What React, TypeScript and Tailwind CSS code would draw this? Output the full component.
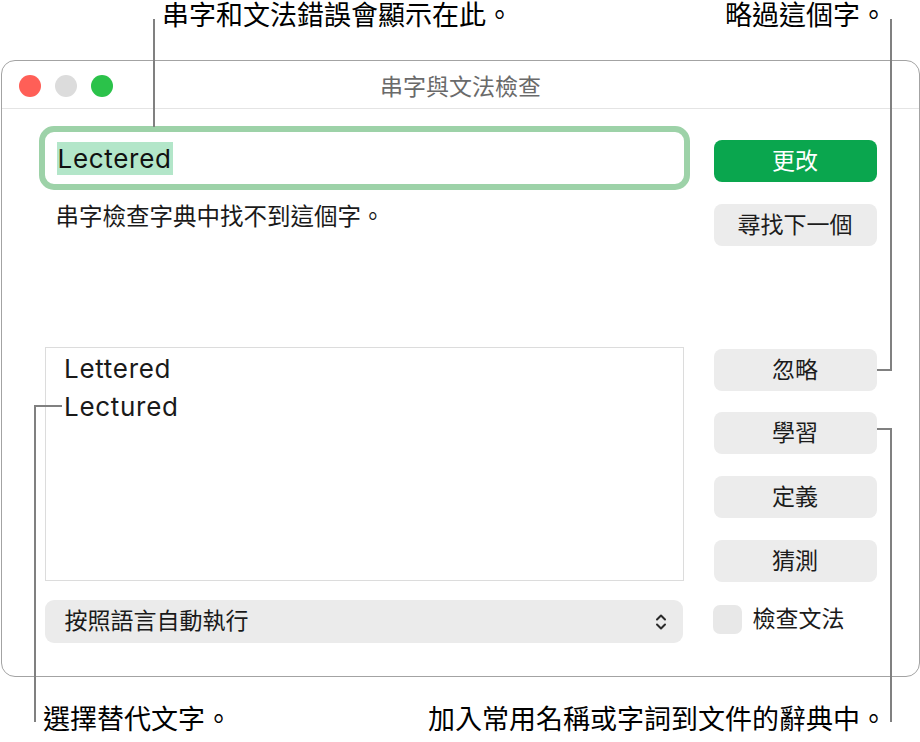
import React from "react";

const FONT = "Inter, 'Noto Sans CJK TC', 'Noto Sans', sans-serif";

function SideButton({ label, primary = false, className = "" }: { label: string; primary?: boolean; className?: string }) {
  return (
    <div
      className={
        "h-[42px] w-[163px] rounded-[8px] flex items-center justify-center text-[23px] leading-none " +
        (primary ? "bg-[#0aa64e] text-white " : "bg-[#ececec] text-[#1c1c1c] ") +
        className
      }
    >
      {label}
    </div>
  );
}

function UpDownChevron() {
  return (
    <svg width="12" height="18" viewBox="0 0 12 18" fill="none">
      <path d="M2 6.5 L6 2.5 L10 6.5" stroke="#2a2a2a" strokeWidth="2" strokeLinecap="round" strokeLinejoin="round" />
      <path d="M2 11.5 L6 15.5 L10 11.5" stroke="#2a2a2a" strokeWidth="2" strokeLinecap="round" strokeLinejoin="round" />
    </svg>
  );
}

export default function App() {
  return (
    <div className="relative w-[920px] h-[742px] bg-white overflow-hidden text-[#1a1a1a]" style={{ fontFamily: FONT }}>
      <div className="pt-[60px] pl-[1px]">
        {/* Spelling and grammar panel */}
        <div className="w-[919px] h-[617px] rounded-[14px] border-[1.5px] border-[#a3a3a3] bg-white flex flex-col">
          {/* title bar */}
          <div className="h-[48px] border-b-[1.5px] border-[#e4e4e4] grid grid-cols-[1fr_auto_1fr] items-center">
            <div className="flex items-center gap-[14px] pl-[16.5px] pt-[2px]">
              <div className="w-[22px] h-[22px] rounded-full bg-[#ff5f57]" />
              <div className="w-[22px] h-[22px] rounded-full bg-[#dcdcdc]" />
              <div className="w-[22px] h-[22px] rounded-full bg-[#2bc24a]" />
            </div>
            <div className="text-[23px] leading-none text-[#6a6a6a] pt-[6px]">串字與文法檢查</div>
            <div />
          </div>

          {/* body */}
          <div className="flex pl-[36.5px] gap-[24px]">
            {/* left column */}
            <div className="w-[651px] flex flex-col">
              <div className="mt-[17px] h-[64px] rounded-[15px] border-[6px] border-[#9dd2a8] bg-white flex items-center pl-[12px]">
                <span className="bg-[#b3e6c9] text-[26px] leading-[33px] px-[1px] tracking-[0.7px] text-[#111]">Lectered</span>
              </div>
              <div className="mt-[12px] pl-[17px] text-[23.5px] leading-[30px]">串字檢查字典中找不到這個字。</div>
              <div className="mt-[115px] mx-[6px] h-[234px] border-[1.5px] border-[#dcdcdc] bg-white pl-[18.5px] pt-[2px]">
                <div className="text-[26px] leading-[37.5px] tracking-[0.7px]">Lettered</div>
                <div className="text-[26px] leading-[37.5px] tracking-[0.7px]">Lectured</div>
              </div>
              <div className="mt-[19px] ml-[6px] mr-[7px] h-[43px] rounded-[9px] bg-[#ebebeb] flex items-center justify-between pl-[20px] pr-[16px]">
                <span className="text-[23px] leading-none">按照語言自動執行</span>
                <UpDownChevron />
              </div>
            </div>

            {/* right column */}
            <div className="w-[163px] flex flex-col">
              <SideButton label="更改" primary className="mt-[31px]" />
              <SideButton label="尋找下一個" className="mt-[22px]" />
              <SideButton label="忽略" className="mt-[103px]" />
              <SideButton label="學習" className="mt-[21px]" />
              <SideButton label="定義" className="mt-[22px]" />
              <SideButton label="猜測" className="mt-[22px]" />
              <div className="mt-[23px] flex items-center gap-[11px] -ml-[1px]">
                <div className="w-[29px] h-[29px] rounded-[7px] bg-[#e8e8e8]" />
                <span className="text-[23px] leading-none">檢查文法</span>
              </div>
            </div>
          </div>
        </div>
      </div>

      {/* callout labels */}
      <div className="absolute left-[162px] top-[2px] text-[27px] leading-none text-black">串字和文法錯誤會顯示在此。</div>
      <div className="absolute left-[725px] top-[2px] text-[27px] leading-none text-black">略過這個字。</div>
      <div className="absolute left-[43px] top-[706px] text-[27px] leading-none text-black">選擇替代文字。</div>
      <div className="absolute left-[428px] top-[706px] text-[27px] leading-none text-black">加入常用名稱或字詞到文件的辭典中。</div>

      {/* callout leader lines */}
      <div className="absolute left-[153px] top-[19px] w-[2px] h-[108px] bg-[#808080]" />
      <div className="absolute left-[890px] top-[19px] w-[2px] h-[352px] bg-[#808080]" />
      <div className="absolute left-[877px] top-[369px] w-[15px] h-[2px] bg-[#808080]" />
      <div className="absolute left-[34px] top-[405px] w-[28px] h-[2px] bg-[#808080]" />
      <div className="absolute left-[34px] top-[405px] w-[2px] h-[317px] bg-[#808080]" />
      <div className="absolute left-[877px] top-[428px] w-[15px] h-[2px] bg-[#808080]" />
      <div className="absolute left-[890px] top-[428px] w-[2px] h-[294px] bg-[#808080]" />
    </div>
  );
}
